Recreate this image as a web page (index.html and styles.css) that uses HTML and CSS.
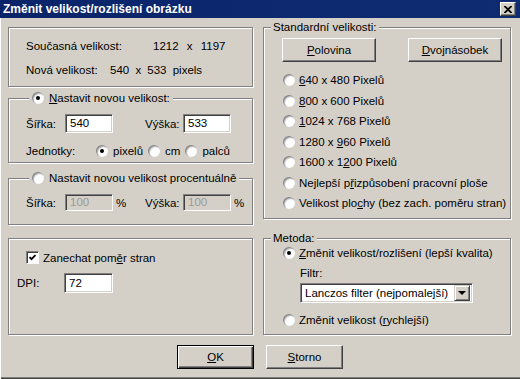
FILE: index.html
```html
<!DOCTYPE html>
<html lang="cs">
  <head>
    <title>Změnit velikost/rozlišení obrázku</title>
    <meta charset="UTF-8" />
    <link rel="stylesheet" href="styles.css">
  </head>
  <body>
    <div class="window">
      <div class="titlebar">
        <span class="title">Změnit velikost/rozlišení obrázku</span>
        <span class="close">
          <svg width="8" height="7" viewBox="0 0 8 7"><path d="M0 0 L7 7 M1 0 L8 7 M7 0 L0 7 M8 0 L1 7" stroke="#000" stroke-width="1.2"/></svg>
        </span>
      </div>

      <div class="columns">
        <div class="col col-left">
          <div class="box info">
            <div class="row"><span class="info-label wide">Současná velikost:</span><span class="info-value">1212 x 1197</span></div>
            <div class="row"><span class="info-label">Nová velikost:</span><span class="info-value tight">540 x 533 pixels</span></div>
          </div>

          <div class="box group g-size">
            <div class="legend"><span class="radio checked"></span><span><u>N</u>astavit novou velikost:</span></div>
            <div class="dims">
              <span>Šířka:</span><span class="field">540</span><span></span>
              <span>Výška:</span><span class="field">533</span>
            </div>
            <div class="row units">
              <span class="units-label">Jednotky:</span>
              <span class="opt"><span class="radio checked"></span>pixelů</span>
              <span class="opt"><span class="radio"></span>cm</span>
              <span class="opt"><span class="radio"></span>palců</span>
            </div>
          </div>

          <div class="box group g-pct">
            <div class="legend"><span class="radio"></span><span>Nastavit novou velikost procentuálně</span></div>
            <div class="dims">
              <span>Šířka:</span><span class="field disabled">100</span><span class="pct">%</span>
              <span>Výška:</span><span class="field disabled">100</span><span class="pct">%</span>
            </div>
          </div>

          <div class="box g-aspect">
            <div class="row check-row">
              <span class="check">
                <svg width="7" height="7" viewBox="0 0 7 7"><path d="M0.5 3 L2.5 5.2 L6.5 1" fill="none" stroke="#000" stroke-width="1.8"/></svg>
              </span>
              <span>Zanechat pom<u>ě</u>r stran</span>
            </div>
            <div class="row dpi-row">
              <span class="dpi-label">DPI:</span><span class="field dpi">72</span>
            </div>
          </div>
        </div>

        <div class="col col-right">
          <div class="box group g-std">
            <div class="legend">Standardní velikosti:</div>
            <div class="row std-buttons">
              <span class="btn"><u>P</u>olovina</span>
              <span class="btn"><u>D</u>vojnásobek</span>
            </div>
            <div class="std-list">
              <div class="opt"><span class="radio"></span><span><u>6</u>40 x 480 Pixelů</span></div>
              <div class="opt"><span class="radio"></span><span><u>8</u>00 x 600 Pixelů</span></div>
              <div class="opt"><span class="radio"></span><span><u>1</u>024 x 768 Pixelů</span></div>
              <div class="opt"><span class="radio"></span><span>1280 x <u>9</u>60 Pixelů</span></div>
              <div class="opt"><span class="radio"></span><span>1600 x 1<u>2</u>00 Pixelů</span></div>
              <div class="opt"><span class="radio"></span><span>Nejlepší p<u>ř</u>izpůsobení pracovní ploše</span></div>
              <div class="opt"><span class="radio"></span><span>Velikost plo<u>c</u>hy (bez zach. poměru stran)</span></div>
            </div>
          </div>

          <div class="box group g-method">
            <div class="legend">Metoda:</div>
            <div class="opt method-opt"><span class="radio checked"></span><span><u>Z</u>měnit velikost/rozlišení (lepší kvalita)</span></div>
            <div class="filter-label">Filtr:</div>
            <div class="combo">
              <span class="combo-text">Lanczos filter (nejpomalejší)</span>
              <span class="combo-arrow"></span>
            </div>
            <div class="opt method-opt second"><span class="radio"></span><span>Změnit velikost (<u>r</u>ychlejší)</span></div>
          </div>
        </div>
      </div>

      <div class="buttons">
        <span class="btn default"><u>O</u>K</span>
        <span class="btn"><u>S</u>torno</span>
      </div>
    </div>
  </body>
</html>
```

FILE: styles.css
```css
body {
  margin: 0;
  padding: 0;
  background: #d4d0c8;
  font-family: "Liberation Sans", Arial, sans-serif;
  font-size: 11.5px;
  color: #000;
}
u {
  text-decoration-thickness: 1px;
  text-underline-offset: 1px;
}
.window {
  width: 520px;
  height: 379px;
  background: #d4d0c8;
  box-sizing: border-box;
  box-shadow: inset 1px 0 0 #fff, inset 0 -1px 0 #404040, inset 0 -2px 0 #808080;
}
.titlebar {
  height: 18px;
  background: linear-gradient(to right, #0a246a, #0f2c72);
  display: flex;
  align-items: center;
  justify-content: space-between;
  padding: 0 4px 0 3px;
}
.title {
  color: #fff;
  font-weight: bold;
  font-size: 12px;
}
.close {
  width: 16px;
  height: 14px;
  box-sizing: border-box;
  background: #d4d0c8;
  border: 1px solid;
  border-color: #fff #404040 #404040 #fff;
  box-shadow: inset -1px -1px 0 #808080;
  display: flex;
  align-items: center;
  justify-content: center;
}
.columns {
  display: flex;
  gap: 10px;
  padding: 9px 0 0 8px;
}
.col {
  display: flex;
  flex-direction: column;
}
.col-left {
  width: 245px;
}
.col-right {
  width: 248px;
}
.box {
  position: relative;
  box-sizing: border-box;
  border: 1px solid #808080;
  box-shadow: 1px 1px 0 #fff, inset 1px 1px 0 #fff;
}
.legend {
  position: absolute;
  top: -8px;
  left: 7px;
  padding: 0 2px;
  line-height: 14px;
  background: #d4d0c8;
  display: flex;
  align-items: center;
  gap: 5px;
}
.row {
  display: flex;
  align-items: center;
}
.opt {
  display: flex;
  align-items: center;
  gap: 4px;
}

/* controls */
.radio {
  width: 12px;
  height: 12px;
  flex: none;
  border-radius: 50%;
  background: #fff;
  box-shadow: inset 1px 1px 1px #808080, inset 2px 2px 1px #c8c8c8;
  position: relative;
}
.radio.checked::after {
  content: "";
  position: absolute;
  left: 4px;
  top: 4px;
  width: 4px;
  height: 4px;
  border-radius: 50%;
  background: #000;
}
.check {
  width: 13px;
  height: 13px;
  box-sizing: border-box;
  background: #fff;
  border: 1px solid;
  border-color: #808080 #fff #fff #808080;
  box-shadow: inset 1px 1px 0 #404040;
  display: flex;
  align-items: center;
  justify-content: center;
}
.field {
  box-sizing: border-box;
  height: 19px;
  width: 48px;
  background: #fff;
  border: 1px solid;
  border-color: #808080 #fff #fff #808080;
  box-shadow: inset 1px 1px 0 #404040, inset -1px -1px 0 #d4d0c8;
  padding: 0 0 0 4px;
  line-height: 17px;
}
.field.disabled {
  background: #d4d0c8;
  color: #9a9a9a;
  height: 17px;
  line-height: 15px;
}
.btn {
  box-sizing: border-box;
  height: 24px;
  display: flex;
  align-items: center;
  justify-content: center;
  border: 1px solid;
  border-color: #fff #404040 #404040 #fff;
  box-shadow: inset -1px -1px 0 #808080;
}
.btn.default {
  border: 1px solid #000;
  box-shadow: inset 1px 1px 0 #fff, inset -1px -1px 0 #404040, inset -2px -2px 0 #808080;
}

/* left column */
.info {
  height: 60px;
  padding: 11px 0 0 17px;
  display: flex;
  flex-direction: column;
  gap: 10px;
}
.info .row {
  height: 14px;
}
.info-label {
  width: 84px;
}
.info-label.wide {
  width: 127px;
}
.info-value {
  word-spacing: 5px;
}
.info-value.tight {
  word-spacing: 3px;
}
.g-size {
  margin-top: 11px;
  height: 65px;
  padding: 15px 0 0 17px;
}
.g-size .legend,
.g-pct .legend {
  left: 20px;
  padding: 0 3px;
}
.dims {
  display: grid;
  grid-template-columns: 39px 48px 32px 38px 48px auto;
  align-items: center;
}
.pct {
  padding-left: 3px;
}
.units {
  margin-top: 10px;
  height: 16px;
}
.units-label {
  width: 70px;
}
.units .opt {
  gap: 5px;
  margin-right: 5px;
}
.units .opt:first-of-type {
  margin-right: 5px;
}
.g-pct {
  margin-top: 15px;
  height: 47px;
  padding: 14px 0 0 17px;
}
.g-pct .dims {
  height: 19px;
}
.g-aspect {
  margin-top: 13px;
  height: 97px;
  padding: 12px 0 0 17px;
}
.check-row {
  gap: 4px;
}
.dpi-row {
  margin-top: 9px;
  margin-left: -9px;
}
.dpi-label {
  width: 47px;
}
.field.dpi {
  width: 49px;
  height: 20px;
  line-height: 18px;
}

/* right column */
.g-std {
  height: 192px;
  padding: 10px 0 0 18px;
}
.std-buttons {
  gap: 32px;
}
.std-buttons .btn {
  width: 94px;
}
.std-list {
  margin-top: 8px;
  padding-left: 1px;
}
.std-list .opt {
  height: 20.5px;
}
.g-method {
  margin-top: 19px;
  height: 97px;
  padding: 6px 0 0 19px;
}
.method-opt {
  height: 16px;
}
.method-opt.second {
  margin-top: 9px;
}
.filter-label {
  margin: 5px 0 0 17px;
  line-height: 14px;
}
.combo {
  margin: 3px 0 0 17px;
  width: 173px;
  height: 20px;
  box-sizing: border-box;
  background: #fff;
  border: 1px solid;
  border-color: #808080 #fff #fff #808080;
  box-shadow: inset 1px 1px 0 #404040, inset -1px -1px 0 #d4d0c8;
  display: flex;
  align-items: center;
  justify-content: space-between;
  padding: 0 2px 0 4px;
}
.combo-arrow {
  width: 16px;
  height: 16px;
  box-sizing: border-box;
  background: #d4d0c8;
  border: 1px solid;
  border-color: #d4d0c8 #404040 #404040 #d4d0c8;
  box-shadow: inset 1px 1px 0 #fff, inset -1px -1px 0 #808080;
  position: relative;
}
.combo-arrow::after {
  content: "";
  position: absolute;
  left: 3px;
  top: 5px;
  border-left: 4px solid transparent;
  border-right: 4px solid transparent;
  border-top: 4px solid #000;
}

.buttons {
  display: flex;
  justify-content: center;
  gap: 12px;
  margin-top: 10px;
}
.buttons .btn {
  width: 77px;
}
```
